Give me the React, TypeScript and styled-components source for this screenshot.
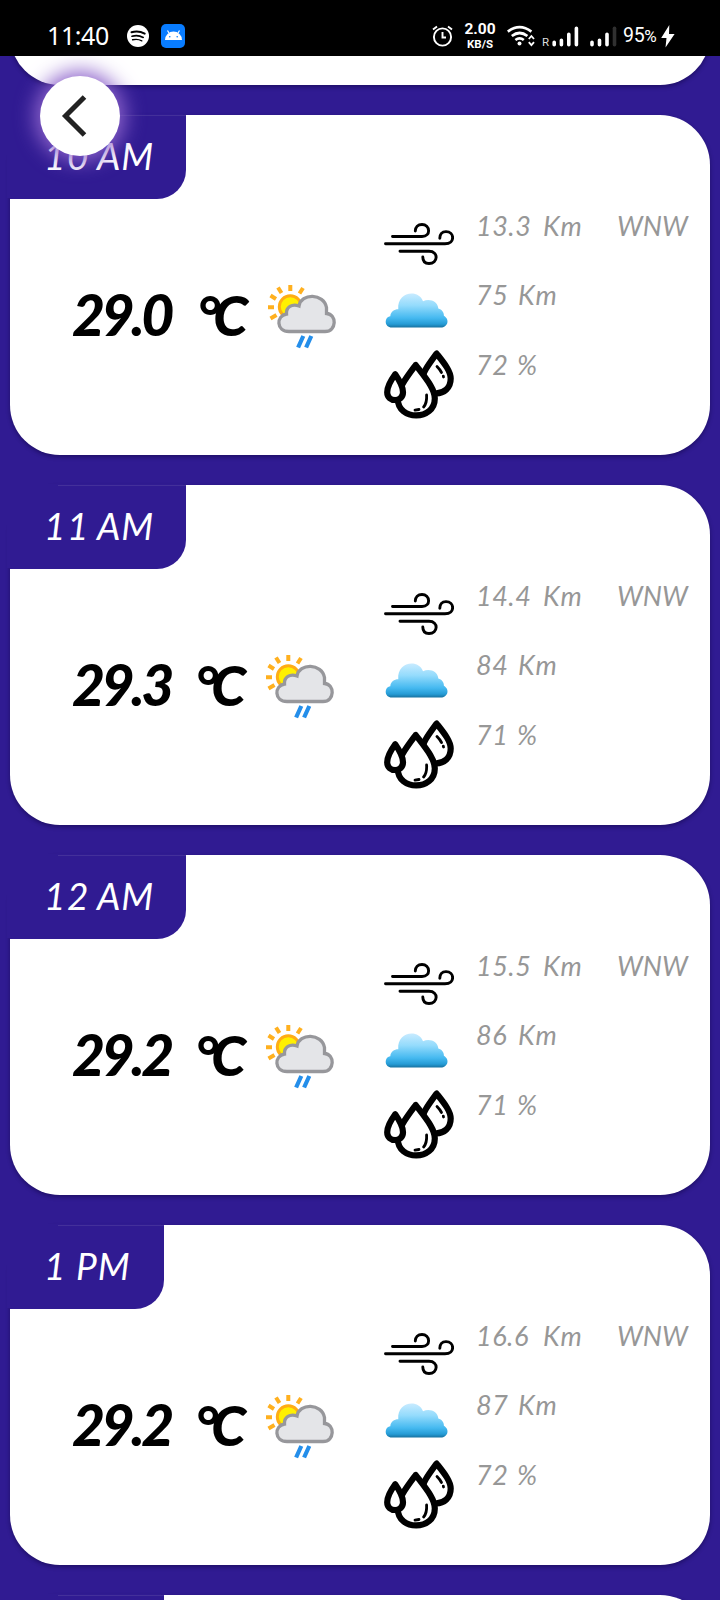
import React from "react";
import styled, { createGlobalStyle } from "styled-components";

const PURPLE = "#301b92";

const Global = createGlobalStyle`
  * { box-sizing: border-box; }
  body { margin: 0; background: ${PURPLE}; }
`;

const Screen = styled.div`
  width: 720px;
  height: 1600px;
  overflow: hidden;
  position: relative;
  display: flex;
  flex-direction: column;
  background: ${PURPLE};
  font-family: Lato, sans-serif;
`;

const StatusBar = styled.header`
  height: 56px;
  flex: none;
  display: flex;
  align-items: center;
  justify-content: space-between;
  padding: 16px 45px 0 47px;
  background: #000;
  color: #fff;
`;

const StatusLeft = styled.div`
  display: flex;
  align-items: center;
`;

const Clock = styled.span`
  width: 80px;
  padding-bottom: 2px;
  font: 400 25px/30px "Noto Sans", sans-serif;
  letter-spacing: -0.4px;
  white-space: nowrap;
`;

const AppBadge = styled.span`
  display: flex;
  margin-left: 12px;
`;

const StatusRight = styled.div`
  display: flex;
  align-items: center;
`;

const Speed = styled.div`
  width: 34px;
  margin: 0 10px;
  display: flex;
  flex-direction: column;
  align-items: center;
  font: 700 15.5px/17px Roboto, sans-serif;
  small { font-size: 11.5px; line-height: 13px; }
`;

const Battery = styled.span`
  width: 38px;
  margin-left: 6px;
  font: 400 19.5px/24px Roboto, sans-serif;
  letter-spacing: -0.3px;
  white-space: nowrap;
  small { font-size: 17px; }
`;

const Viewport = styled.div`
  flex: 1;
  min-height: 0;
  overflow: hidden;
`;

const Feed = styled.main`
  display: flex;
  flex-direction: column;
  gap: 30px;
  padding: 0 10px;
  margin-top: -311px;
`;

const Card = styled.article`
  height: 340px;
  flex: none;
  background: #fff;
  border-radius: 50px;
  box-shadow: 0 2px 4px rgba(10, 0, 50, 0.45);
  display: flex;
  flex-direction: column;
`;

const Tab = styled.h2<{ $width: number }>`
  width: ${(p) => p.$width}px;
  height: 84px;
  margin: 0;
  padding: 0 0 2px 34px;
  display: flex;
  align-items: center;
  background:
    linear-gradient(#43309a, #43309a) 48px 0 / 100% 1px no-repeat,
    ${PURPLE};
  border-radius: 0 0 29px 0;
  box-shadow: -3px -1px 0 ${PURPLE};
  color: #fff;
  font-size: 37px;
  font-weight: 400;
  font-style: italic;
  line-height: 44px;
`;

const Hour = styled.span<{ $wide: boolean }>`
  width: ${(p) => (p.$wide ? 53 : 32)}px;
  letter-spacing: 1.5px;
`;

const Period = styled.span`
  letter-spacing: 1px;
`;

const Body = styled.div`
  flex: 1;
  display: flex;
`;

const Temperature = styled.div`
  width: 367px;
  height: 90px;
  margin-top: 70px;
  padding-left: 62px;
  display: flex;
  align-items: center;
  color: #000;
  font-size: 57px;
  font-weight: 900;
  font-style: italic;
  letter-spacing: -3.5px;
  white-space: nowrap;
  svg { flex: none; margin-top: 8px; }
`;

const Degrees = styled.span<{ $width: number }>`
  width: ${(p) => p.$width}px;
`;

const Unit = styled.span`
  width: 71px;
  font-size: 56px;
  letter-spacing: -7px;
`;

const Details = styled.div`
  flex: 1;
  display: flex;
  flex-direction: column;
  padding: 8px 0 0 7px;
`;

const Detail = styled.div<{ $height: number }>`
  height: ${(p) => p.$height}px;
  display: flex;
  align-items: flex-start;
  svg { flex: none; }
`;

const Reading = styled.div`
  display: flex;
  padding: 2px 0 0 22px;
  color: #979797;
  font-size: 27px;
  font-style: italic;
  line-height: 34px;
  white-space: nowrap;
`;

const Amount = styled.span<{ $width: number }>`
  width: ${(p) => p.$width}px;
  letter-spacing: 0.5px;
`;

const Measure = styled.span`
  width: 74px;
  letter-spacing: 1px;
`;

const BackButton = styled.button`
  position: absolute;
  left: 40px;
  top: 76px;
  width: 80px;
  height: 80px;
  padding: 0;
  border: 0;
  border-radius: 50%;
  background: #fff;
  box-shadow: 0 0 20px 5px #8f65cc;
`;

const AlarmIcon = () => (
  <svg width="21" height="23" viewBox="0 0 21 23" fill="none" stroke="#fff" strokeWidth="1.9">
    <circle cx="10.5" cy="12" r="8.6" />
    <path d="M1 4.5 5 1.5M20 4.5 16 1.5M10.5 7v5.5h3.5" />
  </svg>
);

const SpotifyIcon = () => (
  <svg width="22" height="22" viewBox="0 0 22 22">
    <circle cx="11" cy="11" r="11" fill="#fff" />
    <g fill="none" stroke="#000" strokeLinecap="round">
      <path d="M4.5 7.3q7-2 13.2 1.3" strokeWidth="2" />
      <path d="M5 11.2q6-1.7 11.2 1.2" strokeWidth="1.7" />
      <path d="M5.6 14.8q5-1.3 9.2 1" strokeWidth="1.4" />
    </g>
  </svg>
);

const AndroidIcon = () => (
  <svg width="24" height="24" viewBox="0 0 24 24">
    <rect width="24" height="24" rx="5" fill="#087cff" />
    <path d="M4 16a8.4 8.4 0 0 1 17 0Z" fill="#fff" />
    <path d="m8 9-1.5-2.5M17 9l1.5-2.5" stroke="#fff" strokeWidth="1.2" />
    <circle cx="8.8" cy="12.7" r=".8" fill="#087cff" />
    <circle cx="16.2" cy="12.7" r=".8" fill="#087cff" />
  </svg>
);

const NetworkIcons = () => (
  <svg width="110" height="24" viewBox="0 0 110 24">
    <g fill="none" stroke="#fff" strokeWidth="2.7">
      <path d="M.8 7.6q11.8-9 23.6 0M4.8 12q7.8-6 15.6 0M8.4 16q4.2-3.3 8.4 0" />
    </g>
    <circle cx="12.5" cy="19.5" r="2" fill="#fff" />
    <path d="m21.8 15 2.6-3 2.6 3m-5.2 3.2 2.6 3 2.6-3" fill="none" stroke="#fff" strokeWidth="1.8" />
    <text x="35" y="22.4" fill="#ddd" fontFamily="Roboto" fontSize="11.5">R</text>
    <g stroke="#fff" strokeWidth="3.6" strokeLinecap="round">
      <path d="M47.2 18.3v2.4M54.4 16.3v4.4M61.8 10.3v10.4M69.4 4.3v16.4M85 18.3v2.4M92.5 16.3v4.4M100 10.3v10.4" />
      <path d="M107.5 4.3v16.4" stroke="#303030" />
    </g>
  </svg>
);

const BoltIcon = () => (
  <svg width="14" height="23" viewBox="0 0 14 23">
    <path d="M8.3 0 .2 13h5.3L4.5 22.6 13.6 9H8Z" fill="#fff" />
  </svg>
);

const SunCloudIcon = () => (
  <svg width="70" height="68" viewBox="0 0 70 68">
    <g stroke="#ffb01f" strokeWidth="4">
      <path d="M22.3 1v6M10 3.5l3.5 5.5M2.5 11.5 8 15M0 23.3h6M2.5 34.5 8.5 31M35 4l-3.5 5.5" />
    </g>
    <circle cx="22.3" cy="22.8" r="11" fill="#fff000" stroke="#ffad14" strokeWidth="3" />
    <path
      d="M21 47.5c-13 0-13-16-2.5-17.5C18 23 24 19.5 31 22c2-13 25-13 27.5 1.5v6C69 30 69 47.5 57 47.5Z"
      fill="#e4e5e8"
      stroke="#97979b"
      strokeWidth="3.3"
    />
    <path d="m35.3 52-5.2 11.5M43.3 52l-5.2 11.5" stroke="#248eea" strokeWidth="4.2" />
  </svg>
);

const WindIcon = () => (
  <svg width="70" height="68" viewBox="0 0 70 68" fill="none" stroke="#000" strokeWidth="2.9" strokeLinecap="round">
    <path d="M8.5 29.5H38c9.5 0 8-12 0-12-4 0-6.7 2.5-6.7 6.6M1.5 36.8H61c10.5 0 9.5-12.2 1-12.2-4 0-6.2 2.8-6.2 6.6M16 44.3h29c10 0 9 12.2 0 12.2-3.8 0-6.2-2.4-6.2-6.5" />
  </svg>
);

const CloudIcon = () => (
  <svg width="70" height="68" viewBox="0 0 70 68">
    <defs>
      <linearGradient id="sky" x1="0" y1="0" x2="0" y2="1">
        <stop offset="0" stopColor="#c8ebff" />
        <stop offset=".35" stopColor="#94dbfc" />
        <stop offset=".72" stopColor="#45b9f0" />
        <stop offset=".9" stopColor="#259bd5" />
        <stop offset="1" stopColor="#17719f" />
      </linearGradient>
    </defs>
    <path
      d="M8 51.5C0 51.5 0 41 6.3 40.2c.3-4.5 4.2-7 8-6.9C12.5 15.7 34.5 12.6 39 25.3c6.8-3.5 15 .5 15.3 7.2 3.5 1 5.8 3.8 5.6 7.2 6.5 4 3.5 11.8-2.9 11.8Z"
      fill="url(#sky)"
    />
  </svg>
);

const DropsIcon = () => (
  <svg width="70" height="76" viewBox="0 -4 70 76" fill="#fff" stroke="#000" strokeWidth="6.2" strokeLinejoin="round">
    <path d="M52.6 3.6C45 14 38 23 38 30.5c0 17 28.7 18 28.7-2C66.7 21 60 13 52.6 3.6Z" />
    <path d="M31.7 15C22 28 13.8 38.5 13.8 49c0 22 37 22 37-.5 0-10-9.3-20.5-19.1-33.5Z" />
    <path d="M11.2 24.3C6 31.5 3.2 37 3.2 42.2c0 10.4 15.8 10.4 15.8 0 0-5.2-2.8-10.7-7.8-17.9Z" />
    <g fill="none" strokeWidth="2.8" strokeLinecap="round">
      <path d="M53 16.5q3 3 4.5 6M59.3 26.2l.2.8M42.6 45q.5 8-3 12M35 59.5l-4 .6" />
    </g>
  </svg>
);

type Forecast = {
  hour: string;
  period: string;
  degrees: string;
  wind: string;
  cloud: string;
  humidity: string;
  degreesWidth: number;
};

const forecasts: Forecast[] = [
  { hour: "10", period: "AM", degrees: "29.0", wind: "13.3", cloud: "75", humidity: "72", degreesWidth: 125 },
  { hour: "11", period: "AM", degrees: "29.3", wind: "14.4", cloud: "84", humidity: "71", degreesWidth: 123 },
  { hour: "12", period: "AM", degrees: "29.2", wind: "15.5", cloud: "86", humidity: "71", degreesWidth: 123 },
  { hour: "1", period: "PM", degrees: "29.2", wind: "16.6", cloud: "87", humidity: "72", degreesWidth: 123 },
];

const ForecastCard = ({ item }: { item: Forecast }) => (
  <Card>
    <Tab $width={item.period === "PM" ? 154 : 176}>
      <Hour $wide={item.hour.length > 1}>{item.hour}</Hour>
      <Period>{item.period}</Period>
    </Tab>
    <Body>
      <Temperature>
        <Degrees $width={item.degreesWidth}>{item.degrees}</Degrees>
        <Unit>°C</Unit>
        <SunCloudIcon />
      </Temperature>
      <Details>
        <Detail $height={69}>
          <WindIcon />
          <Reading>
            <Amount $width={67}>{item.wind}</Amount>
            <Measure>Km</Measure>
            <span>WNW</span>
          </Reading>
        </Detail>
        <Detail $height={70}>
          <CloudIcon />
          <Reading>
            <Amount $width={42}>{item.cloud}</Amount>
            <Measure>Km</Measure>
          </Reading>
        </Detail>
        <Detail $height={76}>
          <DropsIcon />
          <Reading>
            <Amount $width={41}>{item.humidity}</Amount>
            <span>%</span>
          </Reading>
        </Detail>
      </Details>
    </Body>
  </Card>
);

export default function App() {
  return (
    <Screen>
      <Global />
      <StatusBar>
        <StatusLeft>
          <Clock>11:40</Clock>
          <SpotifyIcon />
          <AppBadge>
            <AndroidIcon />
          </AppBadge>
        </StatusLeft>
        <StatusRight>
          <AlarmIcon />
          <Speed>
            <span>2.00</span>
            <small>KB/S</small>
          </Speed>
          <NetworkIcons />
          <Battery>
            95<small>%</small>
          </Battery>
          <BoltIcon />
        </StatusRight>
      </StatusBar>
      <Viewport>
        <Feed>
          <Card />
          {forecasts.map((item) => (
            <ForecastCard key={item.hour} item={item} />
          ))}
          <Card>
            <Tab $width={154} />
          </Card>
        </Feed>
      </Viewport>
      <BackButton aria-label="Back">
        <svg width="80" height="80" viewBox="0 0 80 80" fill="none" stroke="#222" strokeWidth="5">
          <path d="M44.5 21 25.5 40l19 19" />
        </svg>
      </BackButton>
    </Screen>
  );
}
